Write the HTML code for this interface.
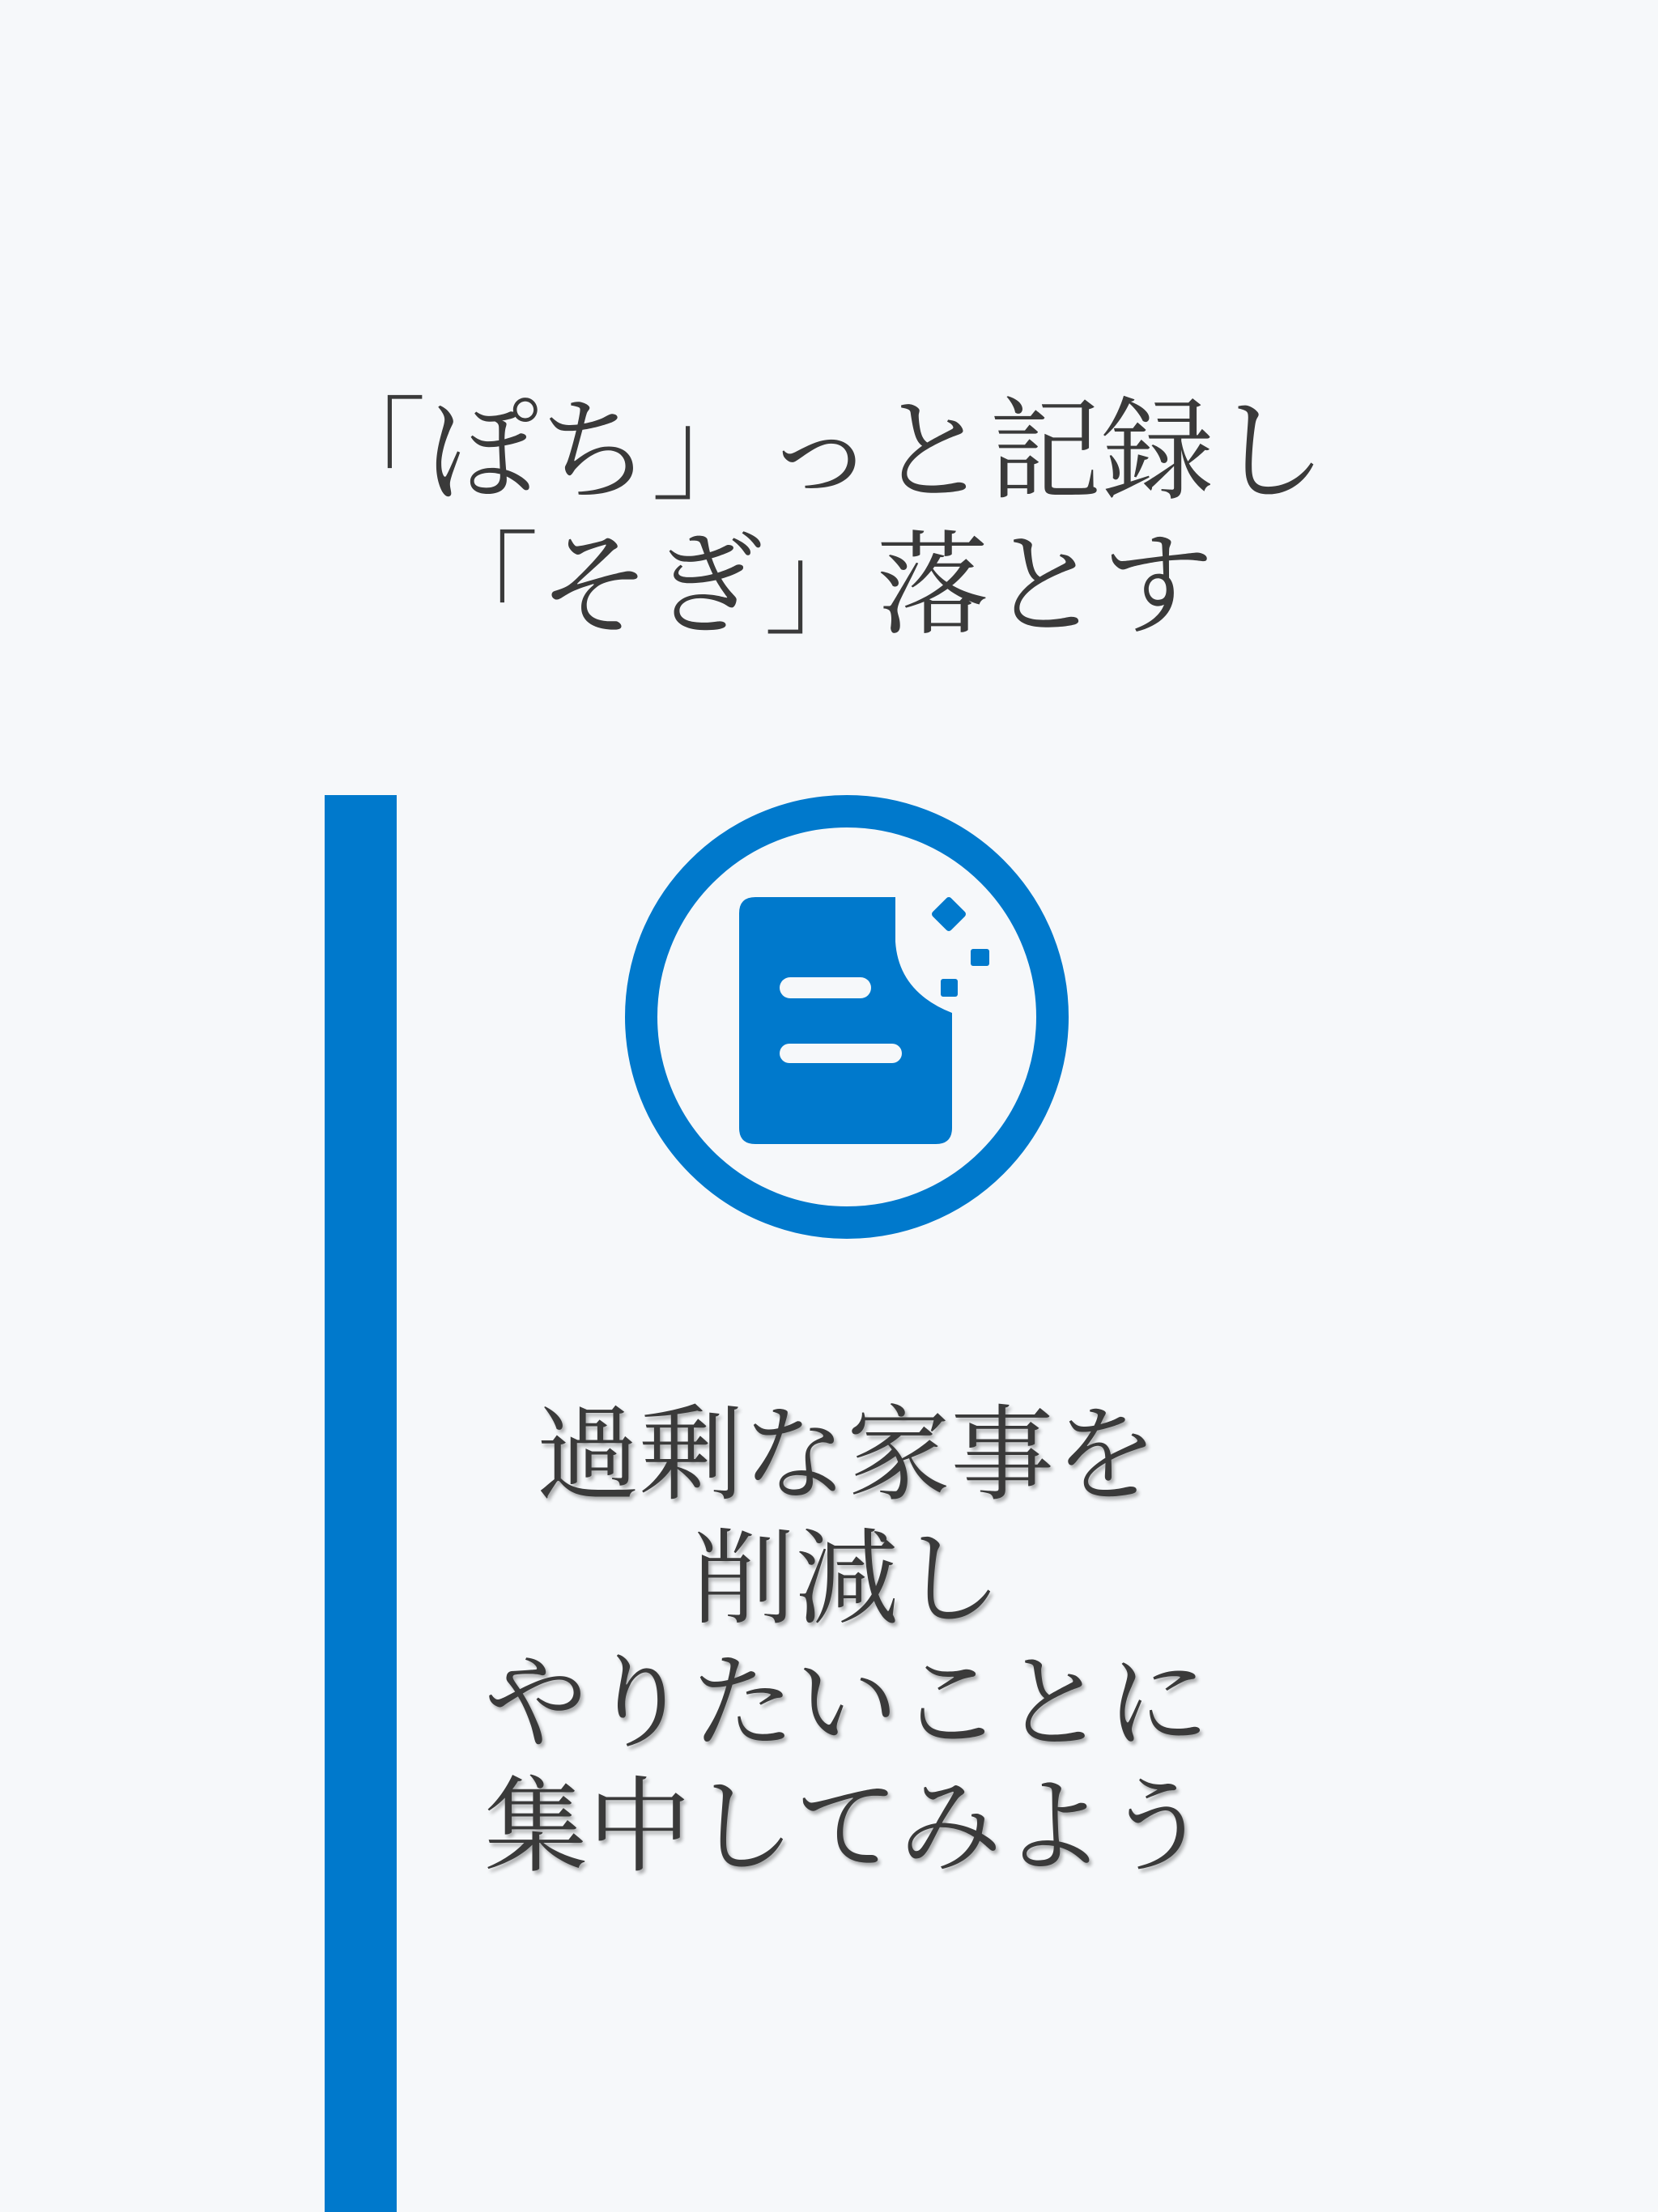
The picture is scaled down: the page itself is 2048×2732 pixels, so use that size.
<!DOCTYPE html>
<html><head><meta charset="utf-8"><style>
html,body{margin:0;padding:0;}
body{width:2048px;height:2732px;background:#f6f8fa;position:relative;overflow:hidden;font-family:"Liberation Serif","Noto Serif CJK SC",serif;color:#3a3a3a;}
.t{position:absolute;left:0;width:2026px;text-align:center;font-size:139px;line-height:166px;top:476px;white-space:nowrap;}
.b{position:absolute;left:0;width:2092px;text-align:center;font-size:128px;line-height:153px;top:1722px;white-space:nowrap;text-shadow:3px 4px 4px rgba(0,0,0,0.3);}
svg{position:absolute;left:0;top:0;}
</style></head><body>
<svg width="2048" height="2732" viewBox="0 0 2048 2732">
<rect x="401" y="982" width="89" height="1750" fill="#0079cc"/>
<circle cx="1046" cy="1256" r="254" fill="none" stroke="#0079cc" stroke-width="40"/>
<path d="M933 1108 H1106 V1163 Q1110 1225 1176 1251 V1393 Q1176 1413 1156 1413 H933 Q913 1413 913 1393 V1128 Q913 1108 933 1108 Z" fill="#0079cc"/>
<rect x="963" y="1207" width="113" height="26" rx="13" fill="#f6f8fa"/>
<rect x="963" y="1289" width="151" height="24" rx="12" fill="#f6f8fa"/>
<rect x="1156" y="1113" width="32" height="32" rx="4" transform="rotate(45 1172 1129)" fill="#0079cc"/>
<rect x="1199" y="1172" width="23" height="21" rx="3" fill="#0079cc"/>
<rect x="1162" y="1209" width="21" height="22" rx="3" fill="#0079cc"/>
</svg>
<div class="t">「ぽち」っと記録し<br>「そぎ」落とす</div>
<div class="b">過剰な家事を<br>削減し<br>やりたいことに<br>集中してみよう</div>
</body></html>
